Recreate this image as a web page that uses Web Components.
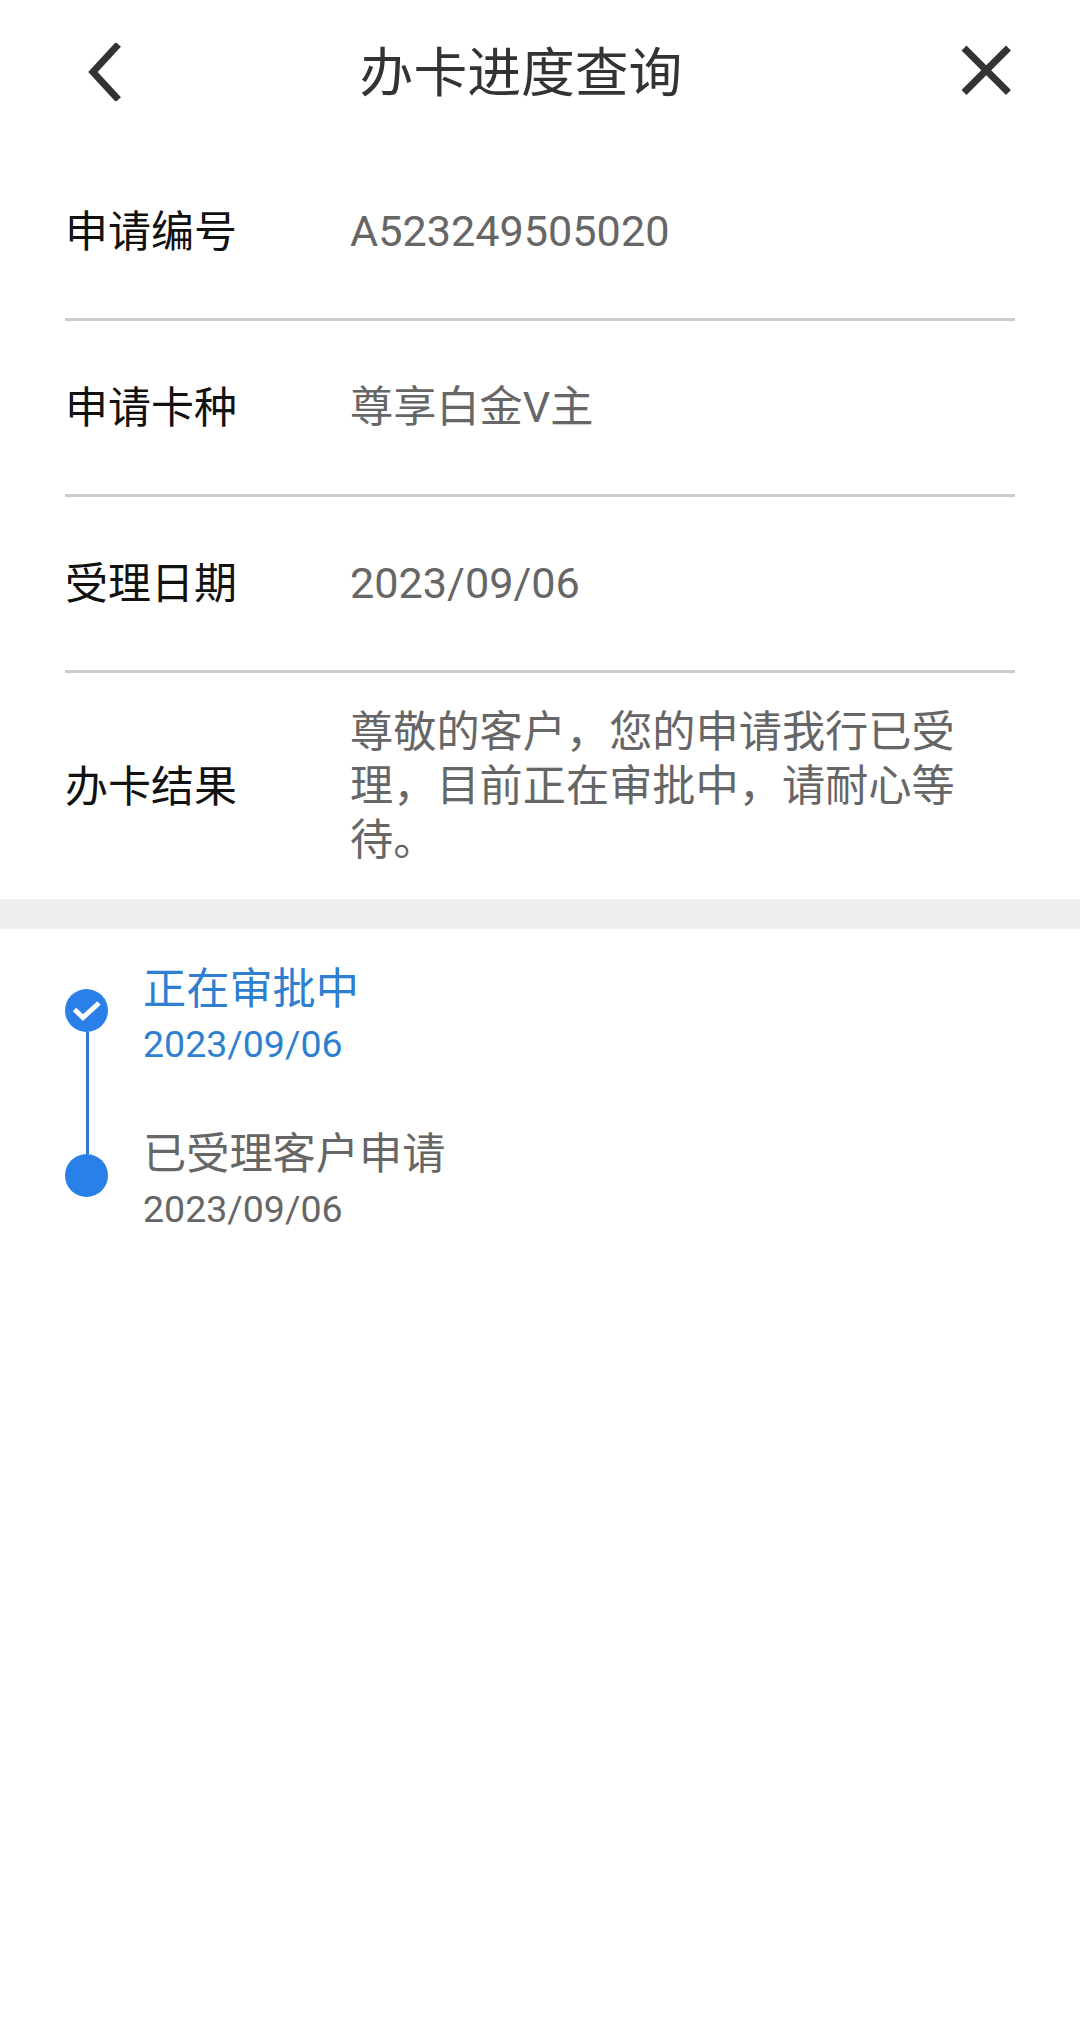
<!DOCTYPE html>
<html lang="zh-CN"><head><meta charset="utf-8"><title>办卡进度查询</title>
<style>
html,body{margin:0;padding:0;background:#fff}
body{font-family:Roboto,"Noto Sans CJK SC",sans-serif;width:1080px;min-height:2029px}
</style></head><body>
<progress-page>
  <nav-bar title="办卡进度查询"></nav-bar>
  <info-row label="申请编号">A523249505020</info-row>
  <info-row label="申请卡种">尊享白金V主</info-row>
  <info-row label="受理日期">2023/09/06</info-row>
  <info-row label="办卡结果" last>尊敬的客户，您的申请我行已受理，目前正在审批中，请耐心等待。</info-row>
  <band-gap></band-gap>
  <time-line>
    <time-item active date="2023/09/06" first>正在审批中</time-item>
    <time-item date="2023/09/06">已受理客户申请</time-item>
  </time-line>
</progress-page>
<script>
function def(name, html, init){
  customElements.define(name, class extends HTMLElement{
    constructor(){super();this.attachShadow({mode:'open'}).innerHTML=html;}
    connectedCallback(){ if(init) init.call(this,this.shadowRoot); }
  });
}
def('progress-page','<style>:host{display:block}</style><slot></slot>');
def('nav-bar',`<style>
:host{display:flex;align-items:center;height:145px;padding:0 70px 0 87px;box-sizing:border-box}
#t{font-size:53.8px;line-height:145px;color:#333;flex:1;text-align:center;padding-right:42px;transform:translateY(1px)}
svg{display:block;flex:none}
</style>
<svg width="36" height="58" viewBox="0 0 36 58" fill="none" stroke="#333" stroke-width="7" stroke-linecap="square" style="margin-top:-1px"><path d="M29 4 6 29l23 25"/></svg>
<div id="t"></div>
<svg width="50" height="50" viewBox="0 0 50 50" fill="none" stroke="#333" stroke-width="7" stroke-linecap="square" style="margin:-5px -1px 0 0"><path d="M5.5 5.5l39.5 39.5M45 5.5 5.5 45"/></svg>`,
function(r){r.getElementById('t').textContent=this.getAttribute('title');});
def('info-row',`<style>
:host{display:block;padding:0 65px}
.r{display:flex;align-items:center;min-height:176px;box-sizing:border-box;border-bottom:3px solid #ccc}
:host([last]) .r{border-bottom:0;min-height:226px;padding-top:1px}
.l{width:285px;flex:none;font-size:43px;color:#111;line-height:54px}
.v{font-size:43.2px;color:#666;line-height:54px;width:620px}
</style><div class="r"><div class="l"></div><div class="v"><slot></slot></div></div>`,
function(r){r.querySelector('.l').textContent=this.getAttribute('label');});
def('band-gap','<style>:host{display:block;height:30px;background:#eee}</style>');
def('time-line','<style>:host{display:block;padding:30px 65px 0}</style><slot></slot>');
def('time-item',`<style>
:host{display:flex;height:165px;color:#666}
:host([active]){color:#2f7fd0}
.rail{width:43px;flex:none;margin-right:35px;position:relative;padding-top:30px;box-sizing:border-box}
.dot{width:43px;height:43px;border-radius:50%;background:#2a80e8;display:block;position:relative}
.dot svg{display:none;position:absolute;inset:0}
:host([active]) .dot svg{display:block}
.line{display:none;position:absolute;left:21px;width:3px;top:73px;height:122px;background:#2b7ad0}
:host([first]) .line{display:block}
.tx{display:flex;flex-direction:column}
.t{font-size:43.2px;line-height:54px;padding-top:4px}
.d{font-size:37.5px;line-height:54px}
</style><div class="rail"><span class="dot"><svg viewBox="0 0 43 43" fill="none" stroke="#fff" stroke-width="5"><path d="M9.5 20.5l8.5 8L34 14"/></svg></span><i class="line"></i></div>
<div class="tx"><div class="t"><slot></slot></div><div class="d"></div></div>`,
function(r){r.querySelector('.d').textContent=this.getAttribute('date');});
</script>
</body></html>
